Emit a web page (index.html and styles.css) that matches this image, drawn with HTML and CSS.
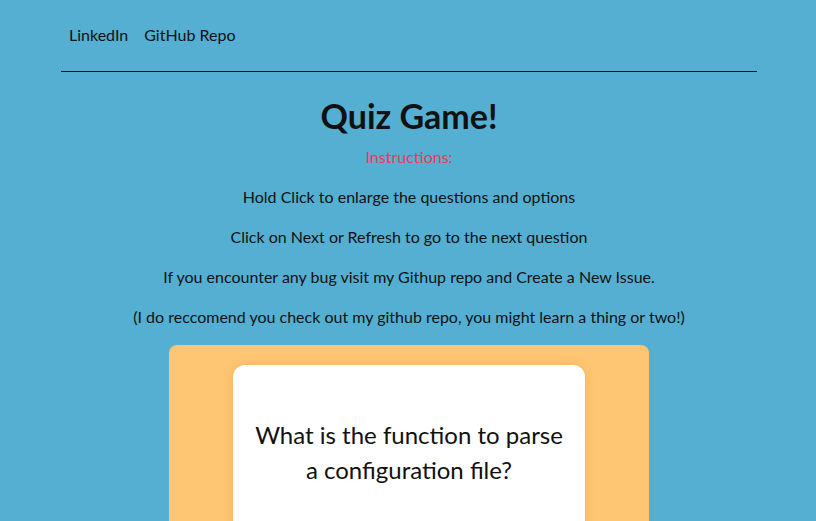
FILE: index.html
```html
<!DOCTYPE html>
<html lang="en">
<head>
<meta charset="utf-8">
<title>Quiz Game!</title>
<link rel="stylesheet" href="styles.css">
</head>
<body>
<header class="topbar">
  <nav class="nav">
    <a class="nav-link" href="#">LinkedIn</a>
    <a class="nav-link" href="#">GitHub Repo</a>
  </nav>
</header>
<main class="main">
  <h1 class="title">Quiz Game!</h1>
  <p class="instr-head">Instructions:</p>
  <p class="instr">Hold Click to enlarge the questions and options</p>
  <p class="instr">Click on Next or Refresh to go to the next question</p>
  <p class="instr">If you encounter any bug visit my Githup repo and Create a New Issue.</p>
  <p class="instr">(I do reccomend you check out my github repo, you might learn a thing or two!)</p>
  <section class="board">
    <div class="question-card">
      <p class="question">What is the function to parse a configuration file?</p>
    </div>
  </section>
</main>
</body>
</html>
```

FILE: styles.css
```css
* { box-sizing: border-box; }
html, body { height: 100%; }
body {
  margin: 0;
  padding-left: 2px;
  background: #54afd2;
  font-family: "Lato", "Inter", "Noto Sans", sans-serif;
  color: #111;
  overflow: hidden;
}
.topbar {
  width: 696px;
  margin: 0 auto;
  border-bottom: 1px solid #111;
}
.nav {
  display: flex;
  gap: 16px;
  padding: 23px 8px 24px;
  line-height: 24px;
  font-size: 16px;
}
.nav-link {
  color: #111;
  text-decoration: none;
}
.main {
  display: flex;
  flex-direction: column;
  align-items: center;
  text-align: center;
}
.title {
  margin: 24px 0 0;
  font-size: 34px;
  line-height: 40px;
  font-weight: 700;
}
.instr-head {
  margin: 9px 0 0;
  color: #ec3a57;
  font-size: 16px;
  line-height: 24px;
}
.instr {
  margin: 16px 0 0;
  font-size: 16px;
  line-height: 24px;
}
.board {
  margin-top: 16px;
  width: 480px;
  height: 260px;
  background: #fec573;
  border-radius: 8px;
  padding: 20px 64px 0;
}
.question-card {
  background: #fff;
  border-radius: 12px;
  box-shadow: 0 0 10px rgba(180, 120, 40, 0.18);
  padding: 52px 14px 40px;
  height: 240px;
}
.question {
  margin: 0;
  font-size: 24px;
  line-height: 35px;
  color: #111;
}
```
